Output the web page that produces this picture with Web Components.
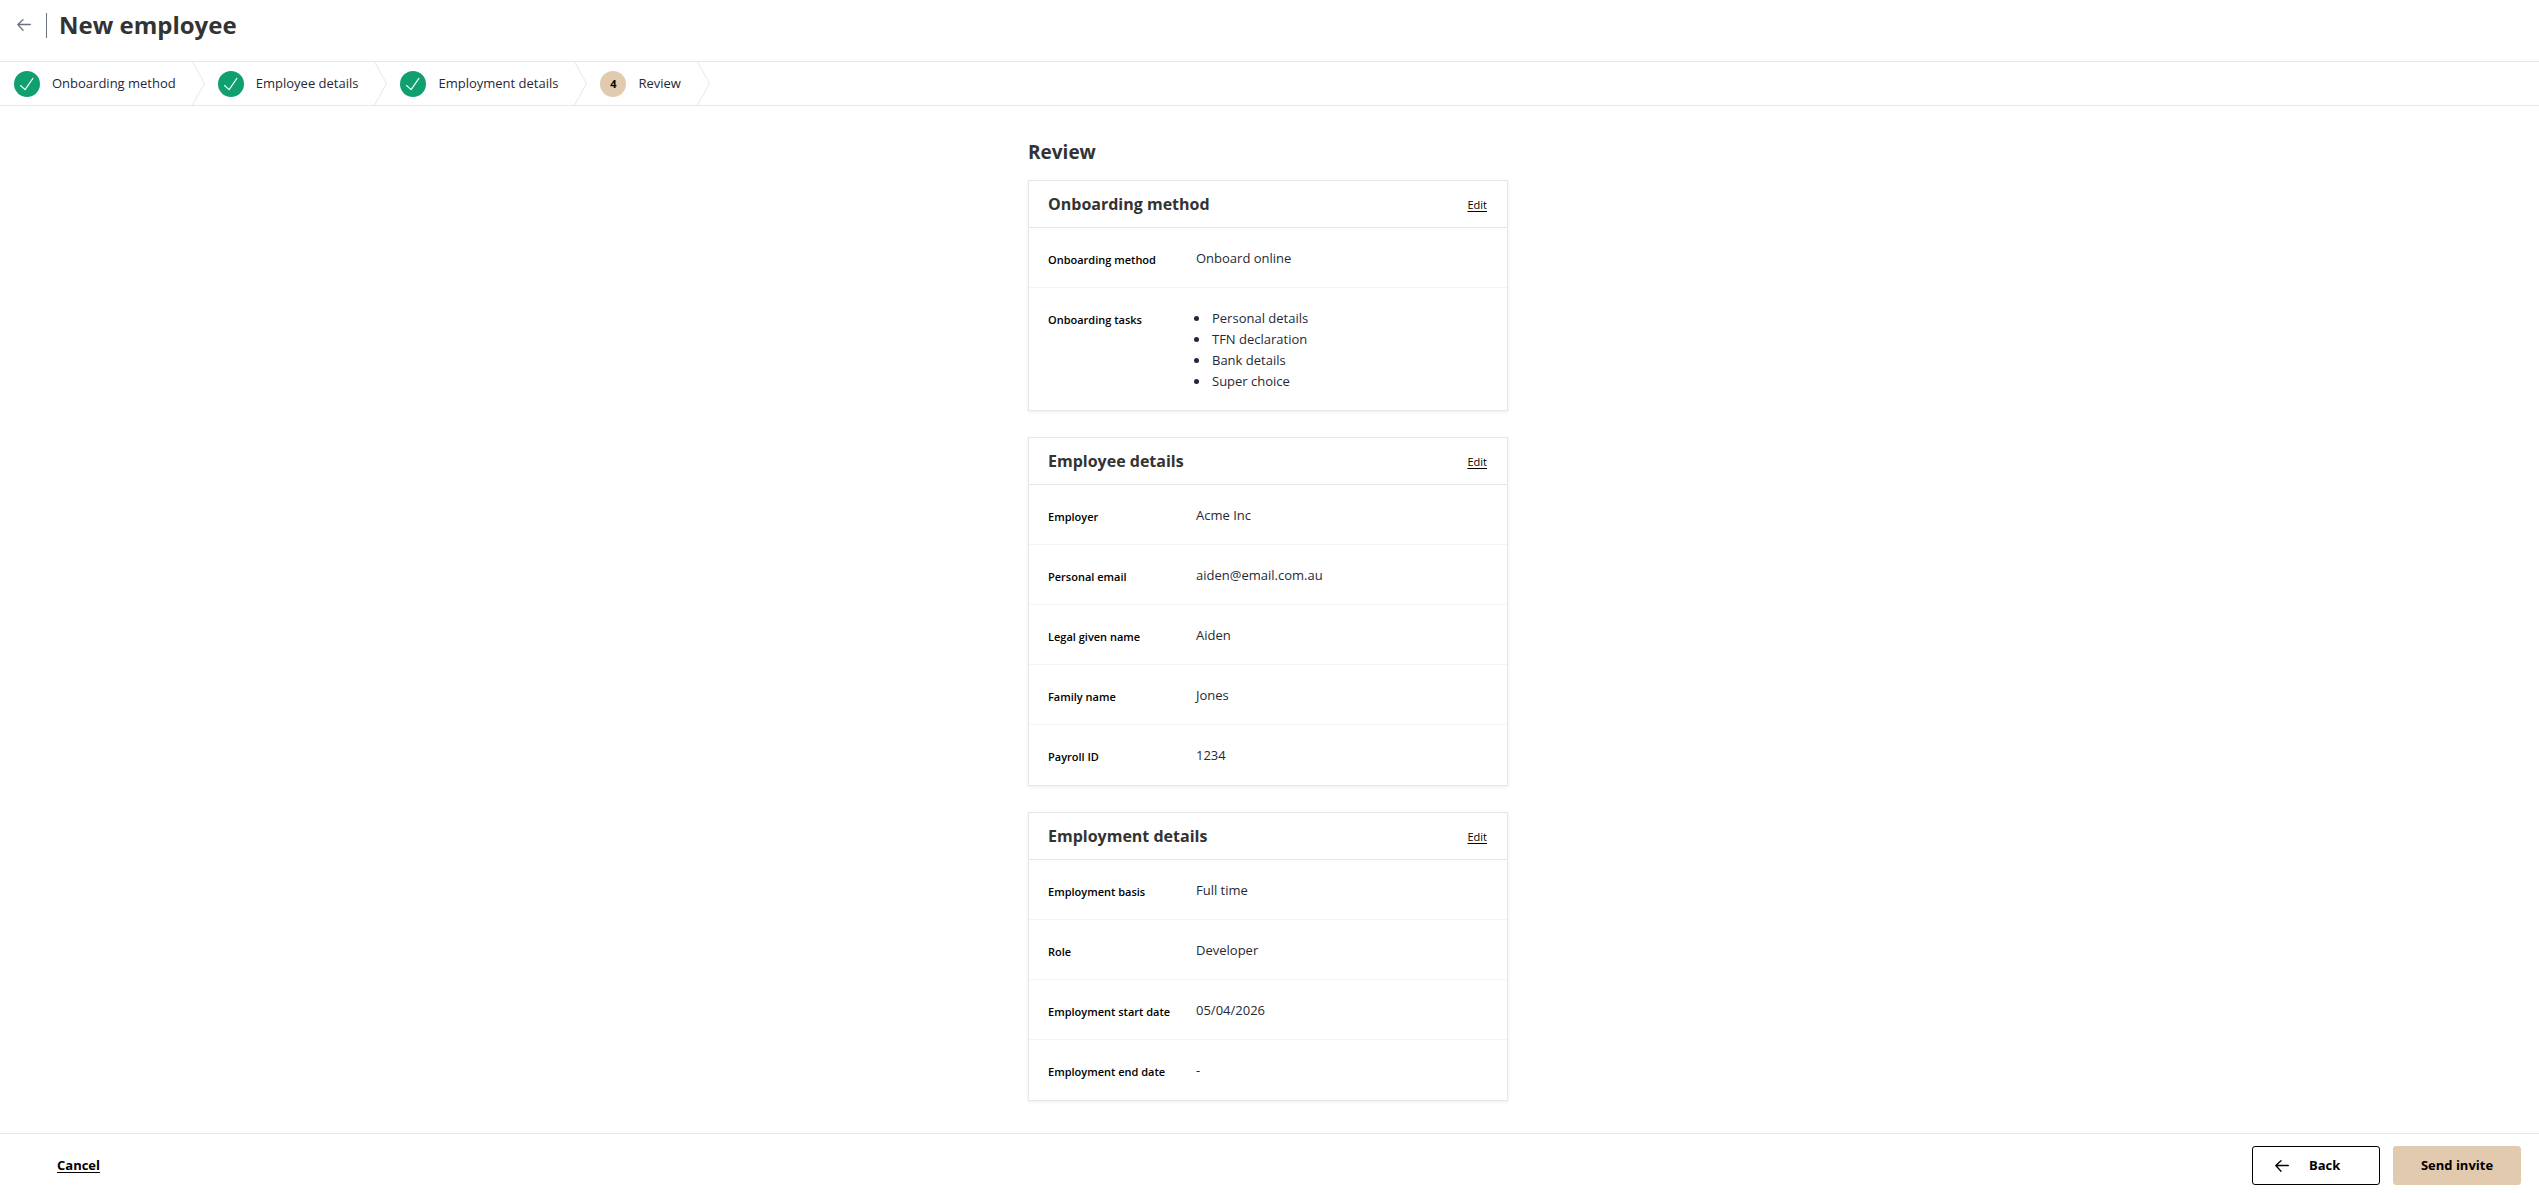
<!DOCTYPE html>
<html lang="en">
<head>
<meta charset="utf-8">
<title>New employee</title>
<style>
  html, body { margin: 0; }
  body {
    font-family: "Open Sans", "Noto Sans", sans-serif;
    font-size: 13px;
    line-height: 21px;
    color: #1f2937;
    background: #fff;
    --line: #e5e7eb;
    --line-soft: #f3f4f6;
    --heading: #333;
    --accent: #e2caae;
    --done: #10a06f;
  }
</style>
</head>
<body>
<onboarding-page>
  <page-header slot="header">New employee</page-header>
  <step-bar slot="steps">
    <step-item state="done">Onboarding method</step-item>
    <step-item state="done">Employee details</step-item>
    <step-item state="done">Employment details</step-item>
    <step-item state="current" number="4">Review</step-item>
  </step-bar>
  <review-card heading="Onboarding method">
    <review-row label="Onboarding method">Onboard online</review-row>
    <review-row label="Onboarding tasks" items="Personal details|TFN declaration|Bank details|Super choice"></review-row>
  </review-card>
  <review-card heading="Employee details">
    <review-row label="Employer">Acme Inc</review-row>
    <review-row label="Personal email">aiden@email.com.au</review-row>
    <review-row label="Legal given name">Aiden</review-row>
    <review-row label="Family name">Jones</review-row>
    <review-row label="Payroll ID">1234</review-row>
  </review-card>
  <review-card heading="Employment details">
    <review-row label="Employment basis">Full time</review-row>
    <review-row label="Role">Developer</review-row>
    <review-row label="Employment start date">05/04/2026</review-row>
    <review-row label="Employment end date">-</review-row>
  </review-card>
  <action-bar slot="footer"></action-bar>
</onboarding-page>

<script>
const define = (name, render) => customElements.define(name, class extends HTMLElement {
  connectedCallback() {
    if (this.shadowRoot) return;
    this.attachShadow({ mode: 'open' }).innerHTML = render(this);
  }
});

const arrow = `<svg width="14" height="12" viewBox="0 0 14 12" fill="none" stroke="currentColor" stroke-width="1.3" stroke-linecap="round" stroke-linejoin="round" aria-hidden="true"><path d="M13.3 5.5H.8M6 .7.8 5.5 6 11.2"/></svg>`;

define('onboarding-page', () => `
  <style>
    :host { display: flex; flex-direction: column; min-height: 100vh; }
    main { flex: 1; padding: 33px 3px 31px 0; }
    .column { width: 480px; max-width: 100%; margin: 0 auto; display: flex; flex-direction: column; gap: 26px; }
    h2 { margin: 0 0 -11px; font-size: 19px; line-height: 26px; font-weight: 700; color: var(--heading); }
  </style>
  <slot name="header"></slot>
  <slot name="steps"></slot>
  <main><div class="column"><h2>Review</h2><slot></slot></div></main>
  <slot name="footer"></slot>`);

define('page-header', () => `
  <style>
    :host { display: block; }
    header { display: flex; align-items: center; height: 50px; padding: 0 17px 11px; }
    button { display: flex; padding: 0; border: 0; background: none; color: #6b7280; cursor: pointer; }
    .rule { width: 1px; height: 25px; margin: 0 12px 0 15px; background: #6b7280; }
    h1 { margin: 0; font-size: 24px; line-height: 32px; font-weight: 700; color: var(--heading); }
  </style>
  <header><button type="button" aria-label="Go back">${arrow}</button><span class="rule"></span><h1><slot></slot></h1></header>`);

define('step-bar', () => `
  <style>
    :host { display: block; border: solid var(--line); border-width: 1px 0; }
    nav { display: flex; height: 43px; padding-left: 1px; }
  </style>
  <nav aria-label="Progress"><slot></slot></nav>`);

define('step-item', el => `
  <style>
    :host { display: flex; align-items: center; padding-left: 13px; color: #1f2937; white-space: nowrap; }
    .mark { display: grid; place-items: center; width: 26px; height: 26px; margin-right: 12px; border-radius: 50%;
      background: var(--done); color: #fff; }
    .current { background: var(--accent); color: #000; font-size: 11px; font-weight: 700; }
    .chevron { margin-left: 16px; }
    svg { display: block; }
  </style>
  <span class="mark ${el.getAttribute('state')}">${el.getAttribute('state') === 'done'
    ? `<svg width="26" height="26" viewBox="0 0 26 26" fill="none" stroke="currentColor" stroke-width="1.1" stroke-linecap="round" stroke-linejoin="round" role="img" aria-label="Completed"><path d="m6.5 14.5 4.6 4.1 7.8-11.2"/></svg>`
    : el.getAttribute('number')}</span>
  <slot></slot>
  <svg class="chevron" width="13" height="43" viewBox="0 0 13 43" fill="none" stroke="#e5e7eb" aria-hidden="true"><path d="M.5 0 12.5 21.5.5 43"/></svg>`);

define('review-card', el => `
  <style>
    :host { display: block; border: 1px solid var(--line); box-shadow: 0 1px 3px rgba(0,0,0,.08); }
    header { display: flex; align-items: center; justify-content: space-between; height: 46px; padding: 0 20px 0 19px; border-bottom: 1px solid var(--line); }
    h3 { margin: 0; font-size: 16px; line-height: 22px; font-weight: 700; color: var(--heading); }
    a { font-size: 11px; color: #000; text-underline-offset: 2px; }
    ::slotted(:last-child) { border-bottom-color: transparent; }
  </style>
  <section>
    <header><h3>${el.getAttribute('heading')}</h3><a href="#edit" aria-label="Edit ${el.getAttribute('heading')}">Edit</a></header>
    <slot></slot>
  </section>`);

define('review-row', el => {
  const items = el.getAttribute('items');
  return `
  <style>
    :host { display: block; border-bottom: 1px solid var(--line-soft); }
    dl { display: grid; grid-template-columns: 148px 1fr; align-items: start; margin: 0; padding: 20px 19px 18px; }
    dt { padding-top: 2px; font-size: 11px; line-height: 19px; font-weight: 600; color: #000; }
    dd { margin: 0; }
    ul { margin: 0 0 -1px; padding-left: 14px; }
    li { padding-left: 2px; }
  </style>
  <dl><dt>${el.getAttribute('label')}</dt><dd>${items
    ? `<ul>${items.split('|').map(t => `<li>${t}</li>`).join('')}</ul>`
    : '<slot></slot>'}</dd></dl>`;
});

define('action-bar', () => `
  <style>
    :host { display: block; position: sticky; bottom: 0; background: #fff; }
    footer { display: flex; align-items: center; gap: 13px; padding: 12px 18px 8px 57px; border-top: 1px solid var(--line); }
    a { margin-right: auto; color: #000; font-weight: 700; text-underline-offset: 2px; }
    button { display: flex; align-items: center; justify-content: center; gap: 20px; width: 128px; height: 39px; padding: 0;
      border: 1px solid var(--accent); border-radius: 3px; background: var(--accent); color: #000; font: inherit; font-weight: 700; cursor: pointer; }
    .back { justify-content: flex-start; padding-left: 22px; border-color: #000; background: #fff; }
  </style>
  <footer>
    <a href="#cancel">Cancel</a>
    <button type="button" class="back">${arrow}Back</button>
    <button type="submit">Send invite</button>
  </footer>`);
</script>
</body>
</html>
